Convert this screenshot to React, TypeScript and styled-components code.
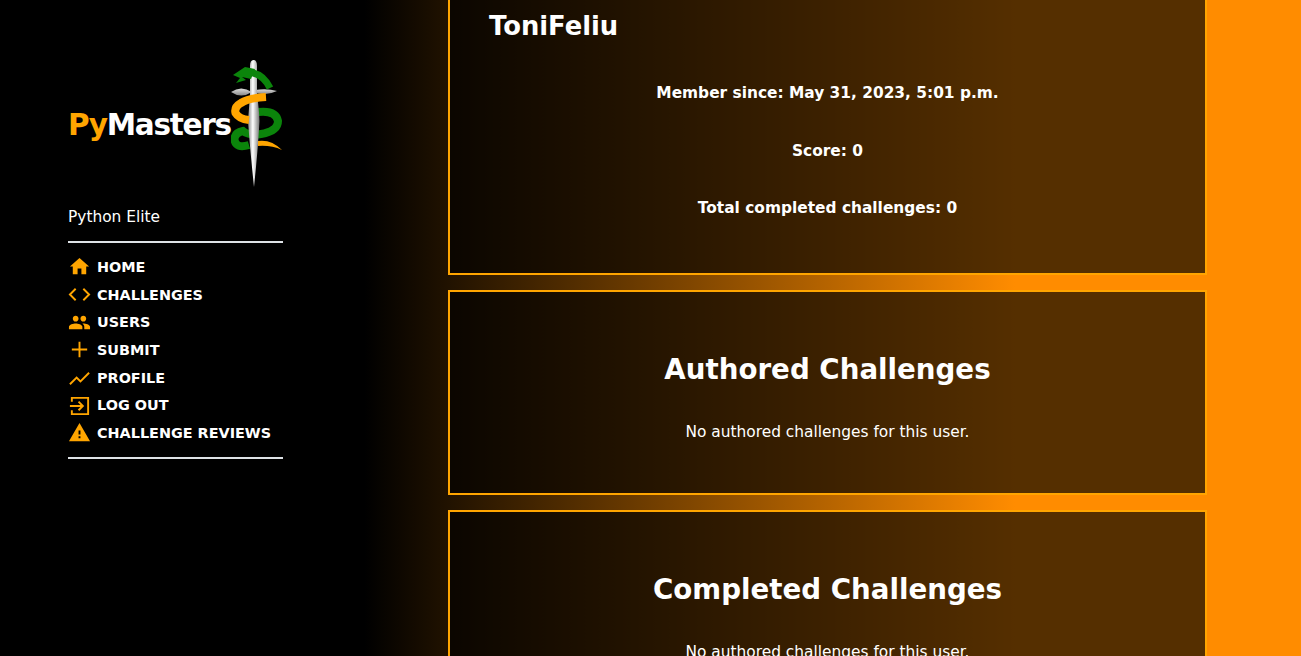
import styled, { createGlobalStyle } from "styled-components";

const GlobalStyle = createGlobalStyle`
  html, body {
    margin: 0;
    height: 100%;
    overflow: hidden;
  }
  body {
    background: linear-gradient(90deg, #000 28%, #ff8c00 78%);
    color: #fff;
    font-family: "DejaVu Sans", sans-serif;
  }
`;

const Page = styled.div`
  display: flex;
  height: 656px;
  overflow: hidden;
`;

const Sidebar = styled.aside`
  width: 215px;
  margin-left: 68px;
  padding-top: 59px;
  flex-shrink: 0;
`;

const LogoRow = styled.div`
  display: flex;
  align-items: flex-start;
  height: 130px;
`;

const LogoText = styled.div`
  margin-top: 46px;
  font-size: 29.5px;
  font-weight: 700;
  letter-spacing: -1.3px;
  line-height: 40px;
  width: 163px;
  white-space: nowrap;
`;

const Py = styled.span`
  color: #ffa500;
`;

const Tagline = styled.p`
  margin: 20px 0 16px;
  font-size: 15.4px;
  line-height: 16px;
`;

const Divider = styled.hr`
  margin: 0;
  border: 0;
  border-top: 2px solid #dee2e6;
`;

const Nav = styled.nav`
  display: flex;
  flex-direction: column;
  padding: 10px 0 10px;
`;

const NavItem = styled.a`
  display: flex;
  align-items: center;
  gap: 6px;
  height: 27.7px;
  font-size: 14.4px;
  font-weight: 700;
  white-space: nowrap;
  color: #fff;
`;

const IconSlot = styled.svg`
  width: 23px;
  height: 23px;
  flex-shrink: 0;
  color: #ffa500;
`;

const Main = styled.main`
  width: 759px;
  margin-left: 165px;
  display: flex;
  flex-direction: column;
  gap: 15px;
  flex-shrink: 0;
`;

const Card = styled.section<{ $height: number; $top?: number }>`
  height: ${(p) => p.$height}px;
  margin-top: ${(p) => p.$top ?? 0}px;
  flex-shrink: 0;
  box-sizing: border-box;
  border: 2px solid #ffa500;
  background: rgba(0, 0, 0, 0.665);
  text-align: center;
  padding: 0 39px;
`;

const UserName = styled.h2`
  margin: 0;
  padding-top: 104px;
  text-align: left;
  font-size: 25.8px;
  line-height: 40px;
  font-weight: 700;
`;

const Stat = styled.p`
  margin: 0 0 33.6px;
  font-size: 15.4px;
  line-height: 24px;
  font-weight: 700;
`;

const Stats = styled.div`
  padding-top: 35px;
`;

const Title = styled.h2`
  margin: 0;
  padding-top: 58px;
  font-size: 27.7px;
  line-height: 40px;
  font-weight: 700;
`;

const Note = styled.p`
  margin: 32px 0 0;
  font-size: 15.4px;
  line-height: 20px;
`;

const Logo = () => (
  <svg width="52" height="130" viewBox="0 0 52 130">
    <defs>
      <linearGradient id="blade" x1="0" x2="1" y1="0" y2="0">
        <stop offset="0" stopColor="#8a8a8a" />
        <stop offset="0.42" stopColor="#fff" />
        <stop offset="1" stopColor="#777" />
      </linearGradient>
      <linearGradient id="guard" x1="0" x2="0" y1="0" y2="1">
        <stop offset="0" stopColor="#ddd" />
        <stop offset="1" stopColor="#888" />
      </linearGradient>
    </defs>
    <path d="M0 33 Q10 26 21 33 Q10 40 0 33 Z" fill="url(#guard)" />
    <path d="M24 31 Q36 29 46 32 Q36 37 24 34 Z" fill="url(#guard)" />
    <path d="M27 53 Q45 51 47 62 Q47 72 30 75 Q18 77 12 72 Q3 74 3.5 81 Q5 90 18 86" fill="none" stroke="#0b850b" strokeWidth="8" />
    <path d="M27 82 Q40 80 51 91 Q40 86 27 87 Z" fill="#ffa500" />
    <path d="M19 7 Q19 1 22.5 1 Q26 1 26 7 L26 35 Q28 50 28.5 62 Q27 90 23 128 Q19 90 17 62 Q18 50 19 35 Z" fill="url(#blade)" />
    <path d="M13 13 Q31 12 39 29" fill="none" stroke="#0b850b" strokeWidth="7" />
    <path d="M2 16 L14 8 L24 10 L20 20 L11 18 L15 21 L5 24 L9 19 Z" fill="#0b850b" />
    <path d="M35 38 Q18 39 10 44 Q3 48 4.5 54 Q8 60 18 61" fill="none" stroke="#ffa500" strokeWidth="8" />
  </svg>
);

const icons = [
  <path d="M10 20v-6h4v6h5v-8h3L12 3 2 12h3v8z" fill="currentColor" />,
  <path d="M8 6l-6 6 6 6M16 6l6 6-6 6" fill="none" stroke="currentColor" strokeWidth="2" />,
  <path d="M16 11c1.66 0 2.99-1.34 2.99-3S17.66 5 16 5s-3 1.34-3 3 1.34 3 3 3zm-8 0c1.66 0 2.99-1.34 2.99-3S9.66 5 8 5 5 6.34 5 8s1.34 3 3 3zm0 2c-2.33 0-7 1.17-7 3.5V19h14v-2.5C15 14.17 10.33 13 8 13zm8 0c-.29 0-.62.02-.97.05 1.16.84 1.97 1.97 1.97 3.45V19h6v-2.5c0-2.33-4.67-3.5-7-3.5z" fill="currentColor" />,
  <path d="M12 4v16M4 12h16" fill="none" stroke="currentColor" strokeWidth="2" />,
  <path d="M2 19l7-7 4 4 9-9" fill="none" stroke="currentColor" strokeWidth="2" />,
  <path d="M4 8V4h17v17H4v-4M2 12.5h13M11 8l4.5 4.5L11 17" fill="none" stroke="currentColor" strokeWidth="2" />,
  <path d="M1 21h22L12 2 1 21zm12-3h-2v-2h2v2zm0-4h-2v-4h2v4z" fill="currentColor" />,
];

const navLabels = ["HOME", "CHALLENGES", "USERS", "SUBMIT", "PROFILE", "LOG OUT", "CHALLENGE REVIEWS"];

export default function App() {
  return (
    <Page>
      <GlobalStyle />
      <Sidebar>
        <LogoRow>
          <LogoText>
            <Py>Py</Py>Masters
          </LogoText>
          <Logo />
        </LogoRow>
        <Tagline>Python Elite</Tagline>
        <Divider />
        <Nav>
          {navLabels.map((label, i) => (
            <NavItem key={label}>
              <IconSlot viewBox="0 0 24 24">{icons[i]}</IconSlot>
              {label}
            </NavItem>
          ))}
        </Nav>
        <Divider />
      </Sidebar>
      <Main>
        <Card $height={375} $top={-100}>
          <UserName>ToniFeliu</UserName>
          <Stats>
            <Stat>Member since: May 31, 2023, 5:01 p.m.</Stat>
            <Stat>Score: 0</Stat>
            <Stat>Total completed challenges: 0</Stat>
          </Stats>
        </Card>
        <Card $height={205}>
          <Title>Authored Challenges</Title>
          <Note>No authored challenges for this user.</Note>
        </Card>
        <Card $height={205}>
          <Title>Completed Challenges</Title>
          <Note>No authored challenges for this user.</Note>
        </Card>
      </Main>
    </Page>
  );
}
